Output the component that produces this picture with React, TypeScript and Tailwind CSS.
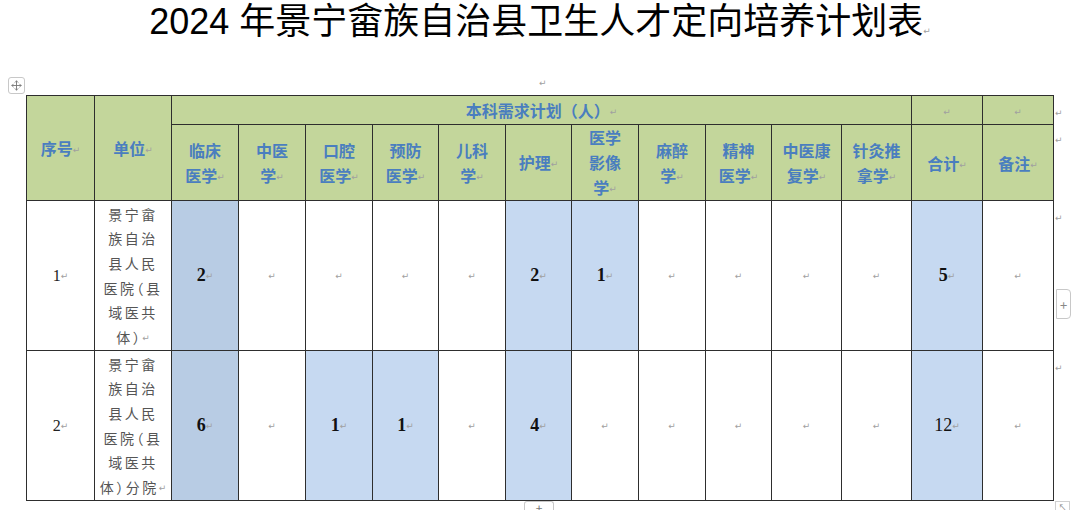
import { Move } from 'lucide-react';

const colWidths = [
  'w-[68px]', 'w-[77px]', 'w-[67px]', 'w-[67px]', 'w-[67px]', 'w-[66px]', 'w-[67px]', 'w-[66px]',
  'w-[67px]', 'w-[67px]', 'w-[66px]', 'w-[70px]', 'w-[70px]', 'w-[71px]', 'w-[71px]',
];

const subjects: string[][] = [
  ['临床', '医学'],
  ['中医', '学'],
  ['口腔', '医学'],
  ['预防', '医学'],
  ['儿科', '学'],
  ['护理'],
  ['医学', '影像', '学'],
  ['麻醉', '学'],
  ['精神', '医学'],
  ['中医康', '复学'],
  ['针灸推', '拿学'],
];

type Cell = { v?: string; bold?: boolean; bg?: 'dark' | 'light' };

const rows: { no: string; unit: string[]; cells: Cell[] }[] = [
  {
    no: '1',
    unit: ['景宁畲', '族自治', '县人民', '医院（县', '域医共', '体）'],
    cells: [
      { v: '2', bold: true, bg: 'dark' }, {}, {}, {}, {},
      { v: '2', bold: true, bg: 'light' }, { v: '1', bold: true, bg: 'light' },
      {}, {}, {}, {},
      { v: '5', bold: true, bg: 'light' }, {},
    ],
  },
  {
    no: '2',
    unit: ['景宁畲', '族自治', '县人民', '医院（县', '域医共', '体）分院'],
    cells: [
      { v: '6', bold: true, bg: 'dark' }, {},
      { v: '1', bold: true, bg: 'light' }, { v: '1', bold: true, bg: 'light' }, {},
      { v: '4', bold: true, bg: 'light' }, {},
      {}, {}, {}, {},
      { v: '12', bg: 'light' }, {},
    ],
  },
];

function Mark() {
  return (
    <span className="inline-block font-['DejaVu_Sans',sans-serif] text-[9px] leading-none font-normal tracking-normal text-[#a0a0a0] align-middle">
      ↵
    </span>
  );
}

const th =
  "border border-[#2e2e2e] p-0 text-center align-middle bg-[#c3d69b] text-[#4a7ebf] font-bold text-[16px] leading-[24px] font-['Noto_Sans_CJK_SC',sans-serif]";
const td = 'border border-[#2e2e2e] p-0 text-center align-middle';

export default function App() {
  return (
    <div className="w-[1080px] h-[510px] bg-white overflow-hidden font-['Noto_Sans_CJK_SC',sans-serif]">
      <h1 className="h-[72px] text-center text-[36px] leading-[44px] text-black font-normal font-['Liberation_Sans','Noto_Sans_CJK_SC',sans-serif]">
        2024 年景宁畲族自治县卫生人才定向培养计划表
        <span className="font-['DejaVu_Sans',sans-serif] text-[9px] text-[#a0a0a0]">↵</span>
      </h1>

      <div className="flex h-[23px] items-start">
        <div className="ml-[8px] mt-[5px] w-[17px] h-[17px] flex items-center justify-center rounded-[3px] border border-[#c8c8c8] bg-white">
          <Move className="w-[11px] h-[11px] text-[#777]" strokeWidth={2} />
        </div>
        <div className="ml-[514px] mt-[1px] leading-none">
          <Mark />
        </div>
      </div>

      <div className="flex">
        <table className="ml-[26px] w-[1028px] table-fixed border-collapse">
          <colgroup>
            {colWidths.map((w, i) => (
              <col key={i} className={w} />
            ))}
          </colgroup>
          <thead>
            <tr className="h-[29px]">
              <th rowSpan={2} className={th}>
                序号<Mark />
              </th>
              <th rowSpan={2} className={th}>
                单位<Mark />
              </th>
              <th colSpan={11} className={th}>
                本科需求计划（人）<Mark />
              </th>
              <th className={th}>
                <Mark />
              </th>
              <th className={th}>
                <Mark />
              </th>
            </tr>
            <tr className="h-[76px]">
              {subjects.map((lines, i) => (
                <th key={i} className={th}>
                  {lines.map((l, j) => (
                    <div key={j} className="h-[25px] leading-[25px]">
                      {l}
                      {j === lines.length - 1 && <Mark />}
                    </div>
                  ))}
                </th>
              ))}
              <th className={th}>
                合计<Mark />
              </th>
              <th className={th}>
                备注<Mark />
              </th>
            </tr>
          </thead>
          <tbody>
            {rows.map((r) => (
              <tr key={r.no} className="h-[150px]">
                <td className={`${td} font-['Liberation_Serif',serif] text-[16px] text-[#222]`}>
                  {r.no}
                  <Mark />
                </td>
                <td className={`${td} text-[14px] tracking-[2.5px] text-[#555] [font-feature-settings:'halt']`}>
                  {r.unit.map((l, j) => (
                    <div key={j} className="h-[24.6px] leading-[24.6px] whitespace-nowrap">
                      {l}
                      {j === r.unit.length - 1 && <Mark />}
                    </div>
                  ))}
                </td>
                {r.cells.map((c, i) => (
                  <td
                    key={i}
                    className={`${td} ${
                      c.bg === 'dark' ? 'bg-[#b8cce4]' : c.bg === 'light' ? 'bg-[#c6d9f1]' : 'bg-white'
                    } font-['Liberation_Serif',serif] text-[18px] text-[#111] ${c.bold ? 'font-bold' : 'font-normal'}`}
                  >
                    {c.v}
                    <Mark />
                  </td>
                ))}
              </tr>
            ))}
          </tbody>
        </table>

        <div className="flex w-[26px] flex-col">
          <div className="h-[29px] pl-[1px] pt-[8px] leading-none">
            <Mark />
          </div>
          <div className="h-[76px] pl-[1px] pt-[6px] leading-none">
            <Mark />
          </div>
          <div className="h-[150px] pl-[1px] pt-[8px] leading-none">
            <Mark />
            <div className="ml-[1px] mt-[65px] flex h-[30px] w-[15px] items-center justify-center rounded-r-[4px] border border-[#c8c8c8] bg-white text-[13px] text-[#888]">
              +
            </div>
          </div>
          <div className="h-[150px] pl-[1px] pt-[8px] leading-none">
            <Mark />
          </div>
        </div>
      </div>

      <div className="flex">
        <div className="ml-[524px] flex h-[12px] w-[30px] items-start justify-center rounded-t-[3px] border border-b-0 border-[#c8c8c8] bg-white text-[12px] leading-[12px] text-[#777]">
          +
        </div>
        <div className="ml-[501px] flex h-[10px] w-[15px] items-start justify-center border border-b-0 border-[#d0d0d0] text-[8px] leading-[9px] text-[#888]">
          ↖
        </div>
      </div>
    </div>
  );
}
